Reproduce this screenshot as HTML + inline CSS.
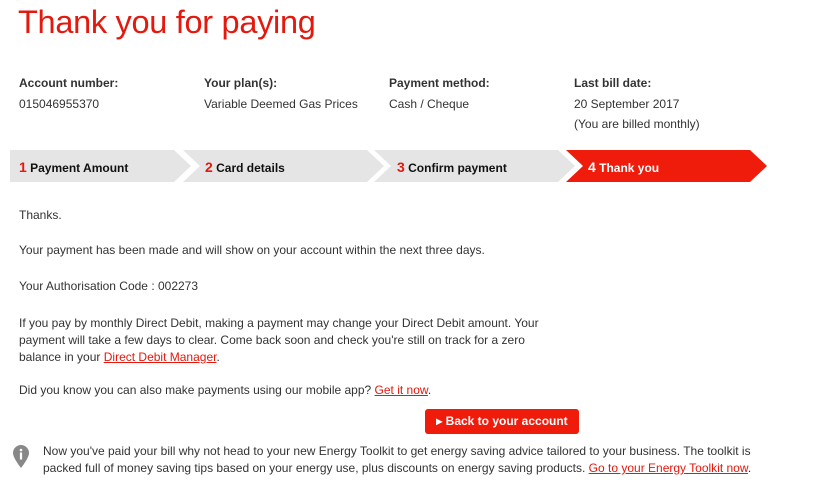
<!DOCTYPE html>
<html><head><meta charset="utf-8"><style>
body{margin:0;width:816px;height:491px;background:#fff;font-family:"Liberation Sans",Arial,sans-serif;color:#222;position:relative;overflow:hidden}
.a{position:absolute}
h1{position:absolute;left:18px;top:4px;margin:0;font-weight:normal;font-size:32.5px;color:#e5180d;letter-spacing:-0.3px}
.lbl{font-weight:bold;font-size:12px;color:#333}
.v{font-size:12px;color:#333;line-height:20px}
p{margin:0;font-size:12px;color:#333;line-height:17px}
a{color:#e5180d;text-decoration:underline}
.st{font-weight:bold;font-size:12px;color:#111}
.st b{color:#e5180d;font-size:14px}
</style></head><body>
<h1>Thank you for paying</h1>
<div class="a lbl" style="left:19px;top:76px">Account number:</div>
<div class="a v" style="left:19px;top:94px">015046955370</div>
<div class="a lbl" style="left:204px;top:76px">Your plan(s):</div>
<div class="a v" style="left:204px;top:94px">Variable Deemed Gas Prices</div>
<div class="a lbl" style="left:389px;top:76px">Payment method:</div>
<div class="a v" style="left:389px;top:94px">Cash / Cheque</div>
<div class="a lbl" style="left:574px;top:76px">Last bill date:</div>
<div class="a v" style="left:574px;top:94px">20 September 2017<br>(You are billed monthly)</div>
<svg class="a" style="left:0;top:0" width="816" height="200">
<polygon fill="#e5e5e5" points="10,150 174,150 191,166 174,182 10,182"/>
<polygon fill="#e5e5e5" points="183,150 367,150 384,166 367,182 183,182 200,166"/>
<polygon fill="#e5e5e5" points="374,150 558,150 575,166 558,182 374,182 391,166"/>
<polygon fill="#ef1c0c" points="566,150 750,150 767,166 750,182 566,182 583,166"/>
</svg>
<div class="a st" style="left:19px;top:159px"><b>1</b> Payment Amount</div>
<div class="a st" style="left:205px;top:159px"><b>2</b> Card details</div>
<div class="a st" style="left:397px;top:159px"><b>3</b> Confirm payment</div>
<div class="a st" style="left:588px;top:159px;color:#fff"><b style="color:#fff">4</b> Thank you</div>
<p class="a" style="left:19px;top:207px">Thanks.</p>
<p class="a" style="left:19px;top:242px">Your payment has been made and will show on your account within the next three days.</p>
<p class="a" style="left:19px;top:278px">Your Authorisation Code : 002273</p>
<p class="a" style="left:19px;top:315px;width:530px">If you pay by monthly Direct Debit, making a payment may change your Direct Debit amount. Your payment will take a few days to clear. Come back soon and check you're still on track for a zero balance in your <a>Direct Debit Manager</a>.</p>
<p class="a" style="left:19px;top:382px">Did you know you can also make payments using our mobile app? <a>Get it now</a>.</p>
<div class="a" style="left:425px;top:409px;width:154px;height:25px;background:#ef1c0c;border-radius:3px;color:#fff;font-weight:bold;font-size:12px;line-height:25px;text-align:center">&#9656; Back to your account</div>
<svg class="a" style="left:11px;top:444px" width="20" height="26"><path d="M10 1a8 8 0 0 0-8 8c0 5 8 15 8 15s8-10 8-15a8 8 0 0 0-8-8z" fill="#888"/><circle cx="10" cy="6" r="1.3" fill="#fff"/><rect x="8.9" y="8.5" width="2.2" height="7" fill="#fff"/></svg>
<p class="a" style="left:43px;top:443px;width:740px">Now you've paid your bill why not head to your new Energy Toolkit to get energy saving advice tailored to your business. The toolkit is packed full of money saving tips based on your energy use, plus discounts on energy saving products. <a>Go to your Energy Toolkit now</a>.</p>
</body></html>
